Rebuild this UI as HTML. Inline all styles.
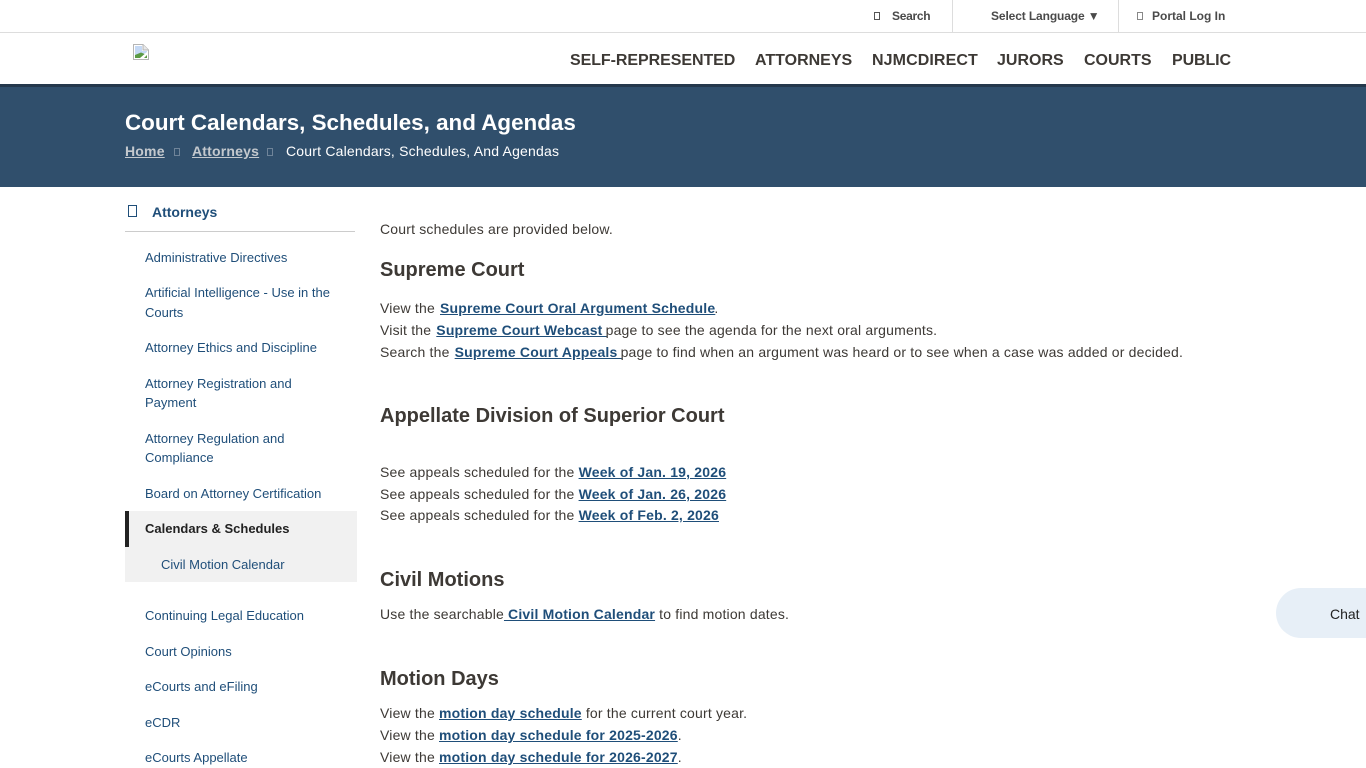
<!DOCTYPE html>
<html lang="en">
<head>
<meta charset="utf-8">
<title>Court Calendars, Schedules, and Agendas</title>
<style>
html,body{margin:0;padding:0;width:1366px;height:768px;overflow:hidden;background:#fff}
body{font-family:"Liberation Sans",Arial,sans-serif;color:#3d3935;position:relative}
.a{position:absolute;white-space:nowrap}
.box{position:absolute;box-sizing:border-box;border:1px solid #555}
.top{font-size:12px;font-weight:700;color:#4a4a4a;line-height:16px;letter-spacing:0}
.nav{font-size:16px;font-weight:700;color:#3d3935;line-height:20px;top:51px}
.side{font-size:13px;color:#1f4e79;line-height:20px;left:145px}
.p{font-size:14px;line-height:20px;left:380px;color:#3d3935;letter-spacing:.185px}
.p a{color:#1f4e79;font-weight:700;text-decoration:underline}
.s{margin-left:1px;margin-right:-1px}
.h{font-size:20px;font-weight:700;line-height:26px;left:380px;color:#3d3935;letter-spacing:0}
</style>
</head>
<body>
<div class="a" style="left:0;top:32px;width:1366px;height:1px;background:#ddd"></div>
<div class="a" style="left:952px;top:0;width:1px;height:32px;background:#ddd"></div>
<div class="a" style="left:1118px;top:0;width:1px;height:32px;background:#ddd"></div>
<div class="box" style="left:874px;top:12px;width:6px;height:8px"></div>
<div class="a top" style="left:892px;top:8px;letter-spacing:-.3px">Search</div>
<div class="a top" style="left:991px;top:8px;letter-spacing:-.12px">Select Language ▼</div>
<div class="box" style="left:1137px;top:12px;width:6px;height:8px;border-color:#888"></div>
<div class="a top" style="left:1152px;top:8px">Portal Log In</div>

<svg class="a" style="left:133px;top:44px" width="16" height="16" viewBox="0 0 16 16">
<path d="M.5.5H10L15.5 6V15.5H.5Z" fill="#fff" stroke="#b5b5b5"/>
<path d="M10 .5V6H15.5" fill="#e8e8e8" stroke="#b5b5b5"/>
<path d="M2 2H9V7H14V9L2 11Z" fill="#c5d9f5"/>
<path d="M2 14V11L8 8.5L14 11V14Z" fill="#5a9a45"/>
<path d="M7 14L14 8V11L11 14Z" fill="#fff"/>
</svg>

<div class="a nav" style="left:570px;letter-spacing:-.06px">SELF-REPRESENTED</div>
<div class="a nav" style="left:755px">ATTORNEYS</div>
<div class="a nav" style="left:872px;letter-spacing:.1px">NJMCDIRECT</div>
<div class="a nav" style="left:997px">JURORS</div>
<div class="a nav" style="left:1084px">COURTS</div>
<div class="a nav" style="left:1172px;letter-spacing:-.1px">PUBLIC</div>

<div class="a" style="left:0;top:84px;width:1366px;height:103px;background:#304f6c"></div>
<div class="a" style="left:0;top:84px;width:1366px;height:3px;background:#24384c"></div>
<div class="a" style="left:125px;top:109px;font-size:22.4px;font-weight:700;line-height:28px;color:#fff">Court Calendars, Schedules, and Agendas</div>
<div class="a" style="left:125px;top:141px;font-size:14px;font-weight:700;line-height:20px;color:#c4c9ce;text-decoration:underline;letter-spacing:.2px">Home</div>
<div class="box" style="left:174px;top:148px;width:6px;height:8px;border-color:#6f8499"></div>
<div class="a" style="left:192px;top:141px;font-size:14px;font-weight:700;line-height:20px;color:#c4c9ce;text-decoration:underline;letter-spacing:.2px">Attorneys</div>
<div class="box" style="left:267px;top:148px;width:6px;height:8px;border-color:#6f8499"></div>
<div class="a" style="left:286px;top:141px;font-size:14px;line-height:20px;color:#fff;letter-spacing:.2px">Court Calendars, Schedules, And Agendas</div>

<div class="box" style="left:128px;top:205px;width:9px;height:12px;border-color:#1f4e79"></div>
<div class="a" style="left:152px;top:202px;font-size:14px;font-weight:700;line-height:20px;color:#1f4e79">Attorneys</div>
<div class="a" style="left:125px;top:231px;width:230px;height:1px;background:#ccc"></div>

<div class="a side" style="top:248px">Administrative Directives</div>
<div class="a side" style="top:283px">Artificial Intelligence - Use in the</div>
<div class="a side" style="top:303px">Courts</div>
<div class="a side" style="top:338px">Attorney Ethics and Discipline</div>
<div class="a side" style="top:374px">Attorney Registration and</div>
<div class="a side" style="top:393px">Payment</div>
<div class="a side" style="top:429px">Attorney Regulation and</div>
<div class="a side" style="top:448px">Compliance</div>
<div class="a side" style="top:484px">Board on Attorney Certification</div>

<div class="a" style="left:125px;top:511px;width:232px;height:71px;background:#f1f1f1"></div>
<div class="a" style="left:125px;top:511px;width:4px;height:36px;background:#222"></div>
<div class="a side" style="top:519px;font-weight:700;color:#222">Calendars &amp; Schedules</div>
<div class="a side" style="top:555px;left:161px">Civil Motion Calendar</div>

<div class="a side" style="top:606px">Continuing Legal Education</div>
<div class="a side" style="top:642px">Court Opinions</div>
<div class="a side" style="top:677px">eCourts and eFiling</div>
<div class="a side" style="top:713px">eCDR</div>
<div class="a side" style="top:748px">eCourts Appellate</div>

<div class="a p" style="top:219px">Court schedules are provided below.</div>
<div class="a h" style="top:257px">Supreme Court</div>
<div class="a p" style="top:298px">View the <a class="s"> Supreme Court Oral Argument Schedule</a>.</div>
<div class="a p" style="top:320px">Visit the <a class="s">Supreme Court Webcast </a>page to see the agenda for the next oral arguments.</div>
<div class="a p" style="top:342px">Search the <a class="s">Supreme Court Appeals </a>page to find when an argument was heard or to see when a case was added or decided.</div>

<div class="a h" style="top:403px">Appellate Division of Superior Court</div>
<div class="a p" style="top:462px">See appeals scheduled for the <a>Week of Jan. 19, 2026</a></div>
<div class="a p" style="top:484px">See appeals scheduled for the <a>Week of Jan. 26, 2026</a></div>
<div class="a p" style="top:505px">See appeals scheduled for the <a>Week of Feb. 2, 2026</a></div>

<div class="a h" style="top:567px">Civil Motions</div>
<div class="a p" style="top:604px">Use the searchable<a> Civil Motion Calendar</a> to find motion dates.</div>

<div class="a h" style="top:666px">Motion Days</div>
<div class="a p" style="top:703px">View the <a>motion day schedule</a> for the current court year.</div>
<div class="a p" style="top:725px">View the <a>motion day schedule for 2025-2026</a>.</div>
<div class="a p" style="top:747px">View the <a>motion day schedule for 2026-2027</a>.</div>

<div class="a" style="left:1276px;top:588px;width:120px;height:50px;border-radius:25px;background:#e7eff7"></div>
<div class="a" style="left:1330px;top:604px;font-size:14px;line-height:20px;color:#222">Chat</div>
</body>
</html>
